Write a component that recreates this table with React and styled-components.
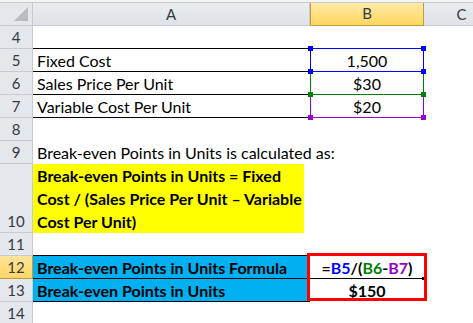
import React from "react";
import styled, { createGlobalStyle, css } from "styled-components";

const GlobalStyle = createGlobalStyle`
  html, body {
    margin: 0;
    padding: 0;
    background: #ffffff;
    overflow: hidden;
  }
  body {
    font-family: "Lato", "Liberation Sans", sans-serif;
    font-size: 16px;
    color: #000000;
  }
`;

const COLS = "33px 277px 114px 76px";

const Sheet = styled.div`
  width: 473px;
  height: 323px;
  overflow: hidden;
  display: flex;
  flex-direction: column;
`;

const TopStrip = styled.div`
  height: 2px;
  background: #f3f4f6;
  border-bottom: 1px solid #c6cbd2;
  flex: none;
`;

const Row = styled.div`
  display: grid;
  grid-template-columns: ${COLS};
  height: ${(p) => p.$h || 23}px;
  flex: none;
`;

const Corner = styled.div`
  background: #e4e7ec;
  border-right: 1px solid #c6cbd2;
  border-bottom: 1px solid #c6cbd2;
  display: flex;
  align-items: flex-end;
  justify-content: flex-end;
  padding: 0 4px 4px 0;
  box-sizing: border-box;
`;

const Triangle = styled.div`
  width: 0;
  height: 0;
  border-left: 14px solid transparent;
  border-bottom: 14px solid #b7bcc3;
`;

const ColHead = styled.div`
  background: linear-gradient(#e9ecf0, #dfe3e8);
  border-right: 1px solid #c6cbd2;
  border-bottom: 1px solid #c6cbd2;
  box-sizing: border-box;
  text-align: center;
  line-height: 22px;
  font-size: 15px;
  color: #333a44;
  ${(p) =>
    p.$active &&
    css`
      background: linear-gradient(#ffe9a6, #ffd75e);
      border: 1px solid #c49b3c;
      border-top: none;
      line-height: 21px;
    `}
`;

const RowHead = styled.div`
  background: #e4e7ec;
  border-right: 1px solid #c6cbd2;
  border-bottom: 1px solid #c6cbd2;
  box-sizing: border-box;
  display: flex;
  align-items: flex-end;
  justify-content: center;
  line-height: 22px;
  font-size: 15px;
  color: #333a44;
  ${(p) =>
    p.$active &&
    css`
      background: linear-gradient(#ffe39a, #ffd766);
      border-bottom-color: #c49b3c;
      border-right-color: #c49b3c;
    `}
`;

const Cell = styled.div`
  position: relative;
  box-sizing: border-box;
  padding: 0 4px;
  line-height: 23px;
  white-space: nowrap;
  background: ${(p) => p.$bg || "transparent"};
  font-weight: ${(p) => (p.$bold ? 700 : 400)};
  text-align: ${(p) => p.$align || "left"};
  ${(p) =>
    p.$line &&
    css`
      box-shadow: inset 0 -1px 0 #000000;
    `}
`;

const WrapBlock = styled.div`
  width: 271px;
  height: 100%;
  background: #ffff00;
  font-weight: 700;
  line-height: 23px;
  padding: 0 1px 0 4px;
  box-sizing: border-box;
  white-space: normal;
`;

const RangeBox = styled.div`
  position: absolute;
  top: -1px;
  left: 0;
  right: 0;
  bottom: 0;
  border: 1px solid ${(p) => p.$color};
  z-index: ${(p) => p.$z};
  pointer-events: none;
`;

const Handle = styled.span`
  position: absolute;
  width: 5px;
  height: 5px;
  background: ${(p) => p.$color};
  ${(p) => (p.$top ? "top: -3px;" : "bottom: -3px;")}
  ${(p) => (p.$left ? "left: -3px;" : "right: -3px;")}
`;

const RedFrame = styled.div`
  position: absolute;
  top: -3px;
  left: -3px;
  width: 120px;
  height: 48px;
  border: 3px solid #ff0000;
  box-sizing: border-box;
  z-index: 3;
`;

const Divider = styled.div`
  position: absolute;
  left: 0;
  right: 0;
  bottom: 0;
  height: 1px;
  background: #000000;
`;

const Dot = styled.span`
  position: absolute;
  right: -1px;
  bottom: -1px;
  width: 3px;
  height: 3px;
  background: #000000;
`;

const Ref = styled.span`
  color: ${(p) => p.$color};
`;

const Range = ({ color, z }) => (
  <RangeBox $color={color} $z={z}>
    <Handle $color={color} $top $left />
    <Handle $color={color} $top />
    <Handle $color={color} $left />
    <Handle $color={color} />
  </RangeBox>
);

const BLUE = "#00b0f0";

const App = () => (
  <>
    <GlobalStyle />
    <Sheet>
      <TopStrip />
      <Row>
        <Corner>
          <Triangle />
        </Corner>
        <ColHead>A</ColHead>
        <ColHead $active>B</ColHead>
        <ColHead>C</ColHead>
      </Row>

      <Row>
        <RowHead>4</RowHead>
        <Cell $line />
        <Cell />
        <Cell />
      </Row>
      <Row>
        <RowHead>5</RowHead>
        <Cell $line>Fixed Cost</Cell>
        <Cell $align="center">
          1,500
          <Range color="#0000ff" z={4} />
        </Cell>
        <Cell />
      </Row>
      <Row>
        <RowHead>6</RowHead>
        <Cell $line>Sales Price Per Unit</Cell>
        <Cell $align="center">
          $30
          <Range color="#008000" z={3} />
        </Cell>
        <Cell />
      </Row>
      <Row>
        <RowHead>7</RowHead>
        <Cell $line>Variable Cost Per Unit</Cell>
        <Cell $align="center">
          $20
          <Range color="#9900cc" z={2} />
        </Cell>
        <Cell />
      </Row>
      <Row>
        <RowHead>8</RowHead>
        <Cell />
        <Cell />
        <Cell />
      </Row>
      <Row>
        <RowHead>9</RowHead>
        <Cell>Break-even Points in Units is calculated as:</Cell>
        <Cell />
        <Cell />
      </Row>
      <Row $h={69}>
        <RowHead>10</RowHead>
        <Cell style={{ padding: 0 }}>
          <WrapBlock>
            Break-even Points in Units = Fixed Cost / (Sales Price Per Unit – Variable Cost Per Unit)
          </WrapBlock>
        </Cell>
        <Cell />
        <Cell />
      </Row>
      <Row>
        <RowHead>11</RowHead>
        <Cell $line />
        <Cell />
        <Cell />
      </Row>
      <Row>
        <RowHead $active>12</RowHead>
        <Cell $bg={BLUE} $bold $line>
          Break-even Points in Units Formula
        </Cell>
        <Cell $bold $align="center">
          =<Ref $color="#0000ff">B5</Ref>/(<Ref $color="#008000">B6</Ref>-
          <Ref $color="#9900cc">B7</Ref>)
          <Divider>
            <Dot />
          </Divider>
          <RedFrame />
        </Cell>
        <Cell />
      </Row>
      <Row>
        <RowHead>13</RowHead>
        <Cell $bg={BLUE} $bold $line>
          Break-even Points in Units
        </Cell>
        <Cell $bold $align="center">
          $150
        </Cell>
        <Cell />
      </Row>
      <Row>
        <RowHead>14</RowHead>
        <Cell />
        <Cell />
        <Cell />
      </Row>
    </Sheet>
  </>
);

export default App;
